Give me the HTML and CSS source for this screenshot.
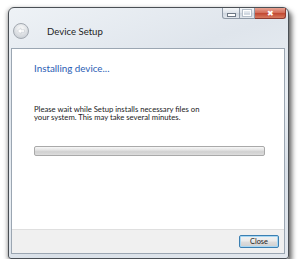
FILE: index.html
```html
<!DOCTYPE html>
<html lang="en">
<head>
    <title>Device Setup</title>
    <link rel="stylesheet" href="styles.css">
</head>
<body>
    <div class="window">
        <div class="titlebar">
            <span class="back-button">
                <svg width="16" height="16" viewBox="0 0 16 16">
                    <defs>
                        <radialGradient id="backFill" cx="50%" cy="35%" r="65%">
                            <stop offset="0" stop-color="#fdfdfd"/>
                            <stop offset="1" stop-color="#c9ced4"/>
                        </radialGradient>
                    </defs>
                    <circle cx="8" cy="8" r="7.5" fill="url(#backFill)" stroke="#a3a9b1" stroke-width="1"/>
                    <path d="M4.5 8 L8 4.8 L8 6.8 L11.5 6.8 L11.5 9.2 L8 9.2 L8 11.2 Z" fill="#fff" stroke="#c4c9cf" stroke-width="0.6"/>
                </svg>
            </span>
            <span class="caption">Device Setup</span>
            <div class="caption-buttons">
                <span class="cap-btn min-btn"><i></i></span>
                <span class="cap-btn max-btn"><i></i></span>
                <span class="cap-btn close-btn">&#x2716;</span>
            </div>
        </div>
        <div class="client">
            <div class="content">
                <h1 class="instruction">Installing device...</h1>
                <p class="message">Please wait while Setup installs necessary files on your system. This may take several minutes.</p>
                <div class="progress"></div>
            </div>
            <div class="footer">
                <button type="button" class="close-button">Close</button>
            </div>
        </div>
    </div>
</body>
</html>
```

FILE: styles.css
```css
body {
    margin: 0;
    padding: 0;
    background-color: #fff;
    font-family: Lato, "Open Sans", sans-serif;
}
.window {
    width: 279px;
    height: 250px;
    margin: 7px 0 0 8px;
    border: 1px solid #4a4f55;
    border-radius: 6px 6px 3px 3px;
    background: linear-gradient(160deg, #eef2f6 0%, #dfe5ec 30%, #e9eef3 55%, #d9e0e8 75%, #e3e8ee 100%);
    box-shadow: 3px 4px 5px rgba(0, 0, 0, 0.55), -1px 1px 4px rgba(0, 0, 0, 0.3);
    display: flex;
    flex-direction: column;
}
.titlebar {
    position: relative;
    height: 40px;
    display: flex;
    align-items: center;
    padding: 6px 0 0 4px;
    box-sizing: border-box;
}
.back-button {
    width: 16px;
    height: 16px;
    display: flex;
}
.caption {
    margin-left: 18px;
    font-size: 9.6px;
    color: #1e1e1e;
}
.caption-buttons {
    position: absolute;
    top: 0;
    right: 2px;
    display: flex;
}
.cap-btn {
    height: 10px;
    border: 1px solid #8f9aa7;
    border-top: none;
    background: linear-gradient(#f4f6f8, #dde3ea 50%, #cdd5de 51%, #e2e7ed);
    display: flex;
    align-items: center;
    justify-content: center;
}
.min-btn {
    width: 16px;
    border-radius: 0 0 0 3px;
}
.min-btn i {
    width: 7px;
    height: 2px;
    margin-top: 4px;
    background: #fff;
    border: 1px solid #6d7885;
}
.max-btn {
    width: 14px;
    border-left: none;
}
.max-btn i {
    width: 6px;
    height: 4px;
    border: 1px solid #fff;
    outline: 1px solid #b5bec8;
}
.close-btn {
    width: 30px;
    border-left: none;
    border-color: #8d3a30;
    border-radius: 0 0 3px 0;
    background: linear-gradient(#e8a393, #d4705c 45%, #c24a33 55%, #d77a5f);
    color: #fff;
    font-size: 8px;
    line-height: 10px;
}
.client {
    flex: 1;
    margin: 0 3px 4px 2px;
    border: 1px solid #9ba6b2;
    background-color: #fff;
    display: flex;
    flex-direction: column;
}
.content {
    flex: 1;
    padding: 12px 19px 0 22px;
}
.instruction {
    margin: 0;
    font-size: 9.8px;
    font-weight: normal;
    color: #2a5db4;
    line-height: 14px;
}
.message {
    width: 176px;
    margin: 30px 0 0;
    font-size: 7.7px;
    line-height: 8px;
    color: #222;
}
.progress {
    margin-top: 25px;
    height: 8px;
    border: 1px solid #a9a9a9;
    border-radius: 2px;
    background: linear-gradient(#f7f7f7, #e2e2e2 40%, #d0d0d0 60%, #dedede);
}
.footer {
    height: 23px;
    border-top: 1px solid #dfdfdf;
    background-color: #f0f0f0;
    display: flex;
    align-items: center;
    justify-content: flex-end;
    padding-right: 5px;
}
.close-button {
    width: 40px;
    height: 13px;
    padding: 0;
    border: 1px solid #3c7fb1;
    border-radius: 2px;
    background: linear-gradient(#f2f2f2, #ebebeb 45%, #dddddd 55%, #cfcfcf);
    box-shadow: inset 0 0 0 1px #a7d8f5;
    font-family: Lato, "Open Sans", sans-serif;
    font-size: 7.4px;
    line-height: 11px;
    color: #222;
}
```
